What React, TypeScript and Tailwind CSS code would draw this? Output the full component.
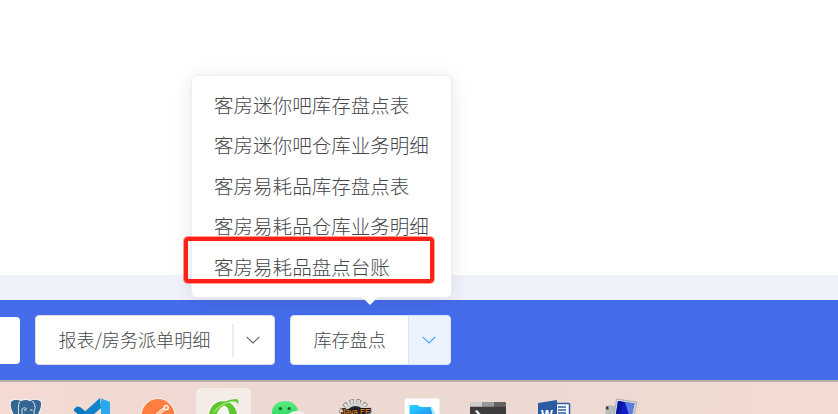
import type { ReactNode } from "react";

const menuItems = [
  "客房迷你吧库存盘点表",
  "客房迷你吧仓库业务明细",
  "客房易耗品库存盘点表",
  "客房易耗品仓库业务明细",
  "客房易耗品盘点台账",
];

const Chevron = ({ className }: { className: string }) => (
  <svg viewBox="0 0 14 8" className={`mr-0.5 h-2 w-3.5 ${className}`} fill="none" stroke="currentColor" strokeWidth="1.1">
    <path d="M0.6 0.8 7 7 13.4 0.8" />
  </svg>
);

const TaskIcon = ({ children }: { children: ReactNode }) => (
  <svg viewBox="0 0 66 32" className="h-8 w-[66px] shrink-0">
    {children}
  </svg>
);

const Elephant = () => (
  <TaskIcon>
    <path
      d="M18 19c3-2.500 7-2 10-.5 3-1.500 6-1.500 9 0 3-1.500 8-2 11 .5 2.500 4-1 10-3 15H21c-3-5-5-11-3-15Z"
      fill="#336791"
      stroke="#f5f3f2"
      strokeWidth="1.200"
    />
    <path d="M26.500 19.500c-1.500 4-1 8-1 13.500M29 33v-6c2-2 4-1 5 0M39.500 19c2.500 3 3.500 7 1.500 10v4" fill="none" stroke="#dfe7ed" strokeWidth="1" />
    <path d="M31 27.500h2.500v.9H31zM37 27.500h2.500v.9H37z" fill="#f0f2f4" />
  </TaskIcon>
);

const Code = () => (
  <TaskIcon>
    <path d="m15 27 3-2.500 3 .5 10 8H20l-5-4Z" fill="#0879be" />
    <path d="M41 16 22 33h12l8-7Z" fill="#0f83ca" />
    <path d="m41 16 10 4v13h-9V16Z" fill="#27a9ef" />
  </TaskIcon>
);

const Postman = () => (
  <TaskIcon>
    <circle cx="33" cy="33.500" r="17" fill="#ff7d3f" stroke="#fbefe9" strokeWidth="1.200" />
    <path d="m29 34 9-8 2 2-7 6Z" fill="#ffc19f" stroke="#fff0e6" strokeWidth="1" />
    <circle cx="41.200" cy="25.500" r="2.200" fill="#ff9c69" stroke="#fff3ea" strokeWidth="1.300" />
  </TaskIcon>
);

const Browser = () => (
  <TaskIcon>
    <rect x="4.500" y="5.500" width="56" height="40" rx="5" fill="#f5ebe7" stroke="#ead9d3" />
    <circle cx="32" cy="33" r="15.500" fill="#f4f5f4" />
    <circle cx="32" cy="33" r="13.800" fill="#5fc52c" />
    <path d="M25.500 33c.5-5 3-8 8-9.500 3 1.500 4.500 4 5 9.500Z" fill="#f3f6f2" />
    <path d="M20 33c3-8 13-15.500 25-16 3 .5 3 3 1.500 5.500 0-2-1-3-3-3C35 20 28 26 25 33Z" fill="#62cc2b" />
    <path d="M23 30c5-6 11-9.500 19-10.500" fill="none" stroke="#d5efc9" strokeWidth=".9" />
  </TaskIcon>
);

const Chat = () => (
  <TaskIcon>
    <defs>
      <linearGradient id="chat" x1="0" y1="0" x2="0" y2="1">
        <stop offset="0" stopColor="#5bed7f" />
        <stop offset="1" stopColor="#20cf5a" />
      </linearGradient>
    </defs>
    <ellipse cx="28" cy="30" rx="13" ry="11" fill="url(#chat)" />
    <circle cx="23.400" cy="26.600" r="1.700" fill="#126c35" />
    <circle cx="32.200" cy="26.600" r="1.700" fill="#126c35" />
    <ellipse cx="40" cy="37.500" rx="10.500" ry="8.700" fill="#f0efef" />
  </TaskIcon>
);

const JavaEE = () => (
  <TaskIcon>
    <circle cx="32.500" cy="34" r="14.500" fill="none" stroke="#77787a" strokeWidth="5" strokeDasharray="4.200 2.700" />
    <circle cx="32.500" cy="34" r="14.500" fill="none" stroke="#dcdcdc" strokeWidth="3.800" strokeDasharray="3 3.900" strokeDashoffset="-.6" />
    <circle cx="32.500" cy="34" r="11.500" fill="#26232d" stroke="#d2d2d2" strokeWidth="3.200" />
    <text
      x="18.500"
      y="33"
      textLength="29"
      lengthAdjust="spacingAndGlyphs"
      className="font-['Liberation_Sans'] text-[8.5px]"
      fill="#ff9a30"
      stroke="#171313"
      strokeWidth="1.800"
      paintOrder="stroke"
    >
      Java EE
    </text>
  </TaskIcon>
);

const Files = () => (
  <TaskIcon>
    <defs>
      <linearGradient id="files" x1="0" y1="0" x2="1" y2="1">
        <stop offset="0" stopColor="#27d9fb" />
        <stop offset="1" stopColor="#228ff5" />
      </linearGradient>
    </defs>
    <rect x="15.500" y="16.500" width="35" height="30" rx="2" fill="#fff" stroke="#f0eceb" />
    <path d="M41 25h2l4 8h-6Z" fill="#9ee9fa" />
    <path d="M20.500 33V23h8l3 2h10l2 8Z" fill="url(#files)" />
  </TaskIcon>
);

const Terminal = () => (
  <TaskIcon>
    <path d="M15 21q0-1 1-1h11v5H15Z" fill="#cdcdcd" />
    <path d="M27 20h12v5H27Z" fill="#999" />
    <path d="M39 20h11q1 0 1 1v4H39Z" fill="#656565" />
    <path d="M15 24.700h36V33H15Z" fill="#3d3d3d" />
    <path d="m20 29 2-1 4.500 5H23Z" fill="#eee" />
  </TaskIcon>
);

const Word = () => (
  <TaskIcon>
    <rect x="34" y="21.500" width="14.500" height="16" rx="1" fill="#fff" stroke="#2b5da5" strokeWidth="1.500" />
    <path d="M37 25h8M37 28h8M37 31h8" stroke="#2b5da5" strokeWidth="1.300" />
    <path d="m17 21 19-3v15H17Z" fill="#2a5ba3" />
    <text x="20" y="36.500" className="font-['Liberation_Sans'] text-[12.5px] font-bold" fill="#fff">
      W
    </text>
  </TaskIcon>
);

const Computer = () => (
  <TaskIcon>
    <path d="m18.500 24.500 4-1.500 6 1v9h-10Z" fill="#b9bcbc" />
    <path d="M19 24.500h2.500v3H19Z" fill="#333c37" />
    <path d="m29.500 17 20.500 3-3 14H27Z" fill="#d5d8dc" stroke="#9c9e9d" strokeWidth=".7" />
    <path d="m31 19 16.500 2.500L44.800 33h-16Z" fill="#111dcc" />
    <path d="m38 20 9.500 1.500L44.800 33H42Z" fill="#5d7ee0" />
    <path d="m31 19 6 1-4 13h-4.200Z" fill="#0815a1" />
  </TaskIcon>
);

const StockMenu = () => (
  <div className="absolute left-[191px] top-[75px] h-[223px] w-[261px] rounded-md border border-[#ebeef5] bg-white pl-[22px] pt-[8.5px] shadow-[0_2px_18px_rgba(0,0,0,0.1)]">
    <ul className="text-[19.55px] font-light leading-[40.5px] text-[#45474b]">
      {menuItems.map((item) => (
        <li key={item} className="whitespace-nowrap">
          {item}
        </li>
      ))}
    </ul>
    <svg viewBox="0 0 16 8" className="absolute left-[170px] top-[221px] h-2 w-4">
      <path d="M0 0h16L8 8Z" fill="#fff" />
    </svg>
  </div>
);

const App = () => {
  return (
    <div className="relative flex h-[414px] w-[838px] flex-col overflow-hidden bg-white font-['Noto_Sans_CJK_SC',sans-serif]">
      <main className="h-[275px] shrink-0" />
      <div className="h-[25px] shrink-0 bg-[#eff2fb]" />

      <footer className="flex h-20 shrink-0 items-center bg-[#456ceb] text-[18.1px] font-light text-[#45474b]">
        <div className="h-[47px] w-5 rounded-r bg-white" />
        <div className="ml-[15px] flex h-[50px] w-60 items-center rounded border border-[#dcdfe6] bg-white">
          <span className="w-[196px] whitespace-nowrap pb-px pl-[22.5px]">报表/房务派单明细</span>
          <span className="h-[33px] w-0.5 bg-[#ebecf2]" />
          <span className="flex flex-1 justify-center">
            <Chevron className="text-[#606266]" />
          </span>
        </div>
        <div className="ml-[15px] flex h-[50px] w-[161px] overflow-hidden rounded border border-[#d4e4fa] bg-white">
          <span className="flex w-[117px] items-center whitespace-nowrap pb-px pl-[22.5px]">库存盘点</span>
          <span className="flex flex-1 items-center justify-center border-l border-[#cfe2fb] bg-[#eaf3ff]">
            <Chevron className="text-[#409eff]" />
          </span>
        </div>
      </footer>

      <div className="flex h-[34px] shrink-0 border-t-2 border-[#bbafae] bg-linear-to-r from-[#f4dad2] via-[#ebd9d2] to-[#f2dbd2]">
        <div className="-ml-[7px] flex">
          <Elephant />
          <Code />
          <Postman />
          <Browser />
          <Chat />
          <JavaEE />
          <Files />
          <Terminal />
          <Word />
          <Computer />
        </div>
      </div>

      <StockMenu />
      <div className="absolute left-[184px] top-[237px] h-[46px] w-[250px] rounded-[4px] border-4 border-[#ff2116] shadow-[0_0_0_1px_rgba(255,33,22,0.45)]" />
    </div>
  );
};

export default App;
